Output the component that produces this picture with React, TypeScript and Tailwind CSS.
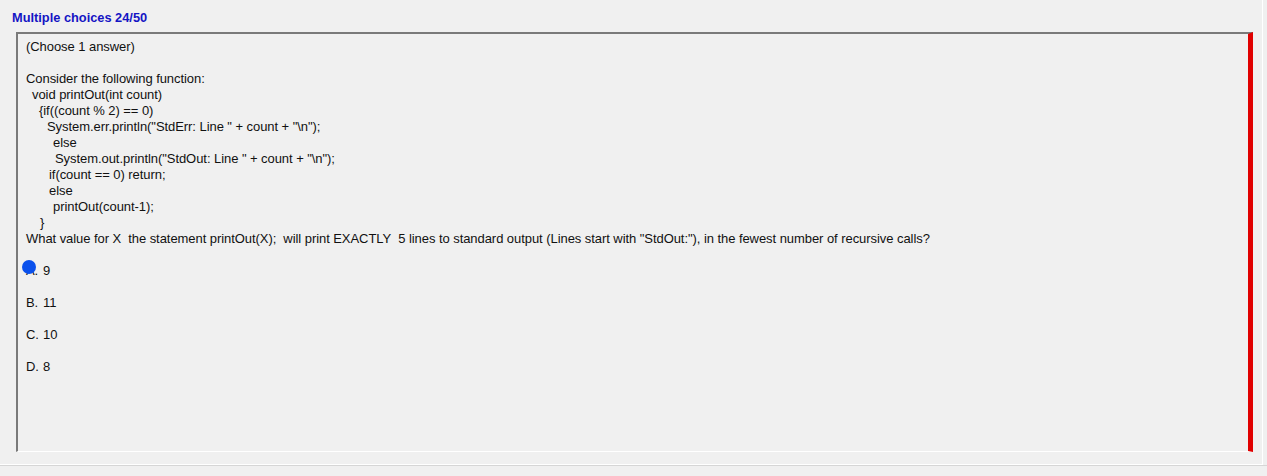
export default function App() {
  const code: [string, string][] = [
    ["pl-[6px]", "void printOut(int count)"],
    ["pl-[13px]", "{if((count % 2) == 0)"],
    ["pl-[21px]", 'System.err.println("StdErr: Line " + count + "\\n");'],
    ["pl-[27px]", "else"],
    ["pl-[29px]", 'System.out.println("StdOut: Line " + count + "\\n");'],
    ["pl-[23px]", "if(count == 0) return;"],
    ["pl-[23px]", "else"],
    ["pl-[27px]", "printOut(count-1);"],
    ["pl-[14px]", "}"],
  ];
  const options = [
    ["A.", "9"],
    ["B.", "11"],
    ["C.", "10"],
    ["D.", "8"],
  ];

  return (
    <div className="h-[476px] w-full bg-[#f0f0f0] font-['Liberation_Sans',Arial,sans-serif] text-[13px] text-[#111]">
      <div className="h-[465px] w-[1263px] border-r border-b border-white">
        <div className="h-[32px] pl-3 pt-[10px] text-[12.8px] font-bold leading-[16px] text-[#1414c4]">
          Multiple choices 24/50
        </div>
        <div className="ml-4 h-[420px] w-[1237px] border-t-2 border-l-2 border-r-[5px] border-b border-[#7a7a7a] border-r-[#e00000] border-b-white pl-2 pt-[5px] leading-[16px] tracking-[-0.06px]">
          <div>(Choose 1 answer)</div>
          <div className="h-4" />
          <div>Consider the following function:</div>
          {code.map(([pad, line], i) => (
            <div key={i} className={pad}>
              {line}
            </div>
          ))}
          <div>
            What value for X&nbsp; the statement printOut(X);&nbsp; will print EXACTLY&nbsp; 5 lines to
            standard output (Lines start with "StdOut:"), in the fewest number of recursive calls?
          </div>
          <div className="mt-4 flex flex-col gap-4">
            {options.map(([letter, value], i) => (
              <div key={letter} className="relative flex">
                {i === 0 && (
                  <span className="absolute -left-[4px] -top-[3px] h-[14px] w-[14px] rounded-full bg-[#0a50ec]" />
                )}
                <span className="w-[17px]">{letter}</span>
                <span>{value}</span>
              </div>
            ))}
          </div>
        </div>
      </div>
      <div className="border-t border-[#d6d6d6]" />
    </div>
  );
}
